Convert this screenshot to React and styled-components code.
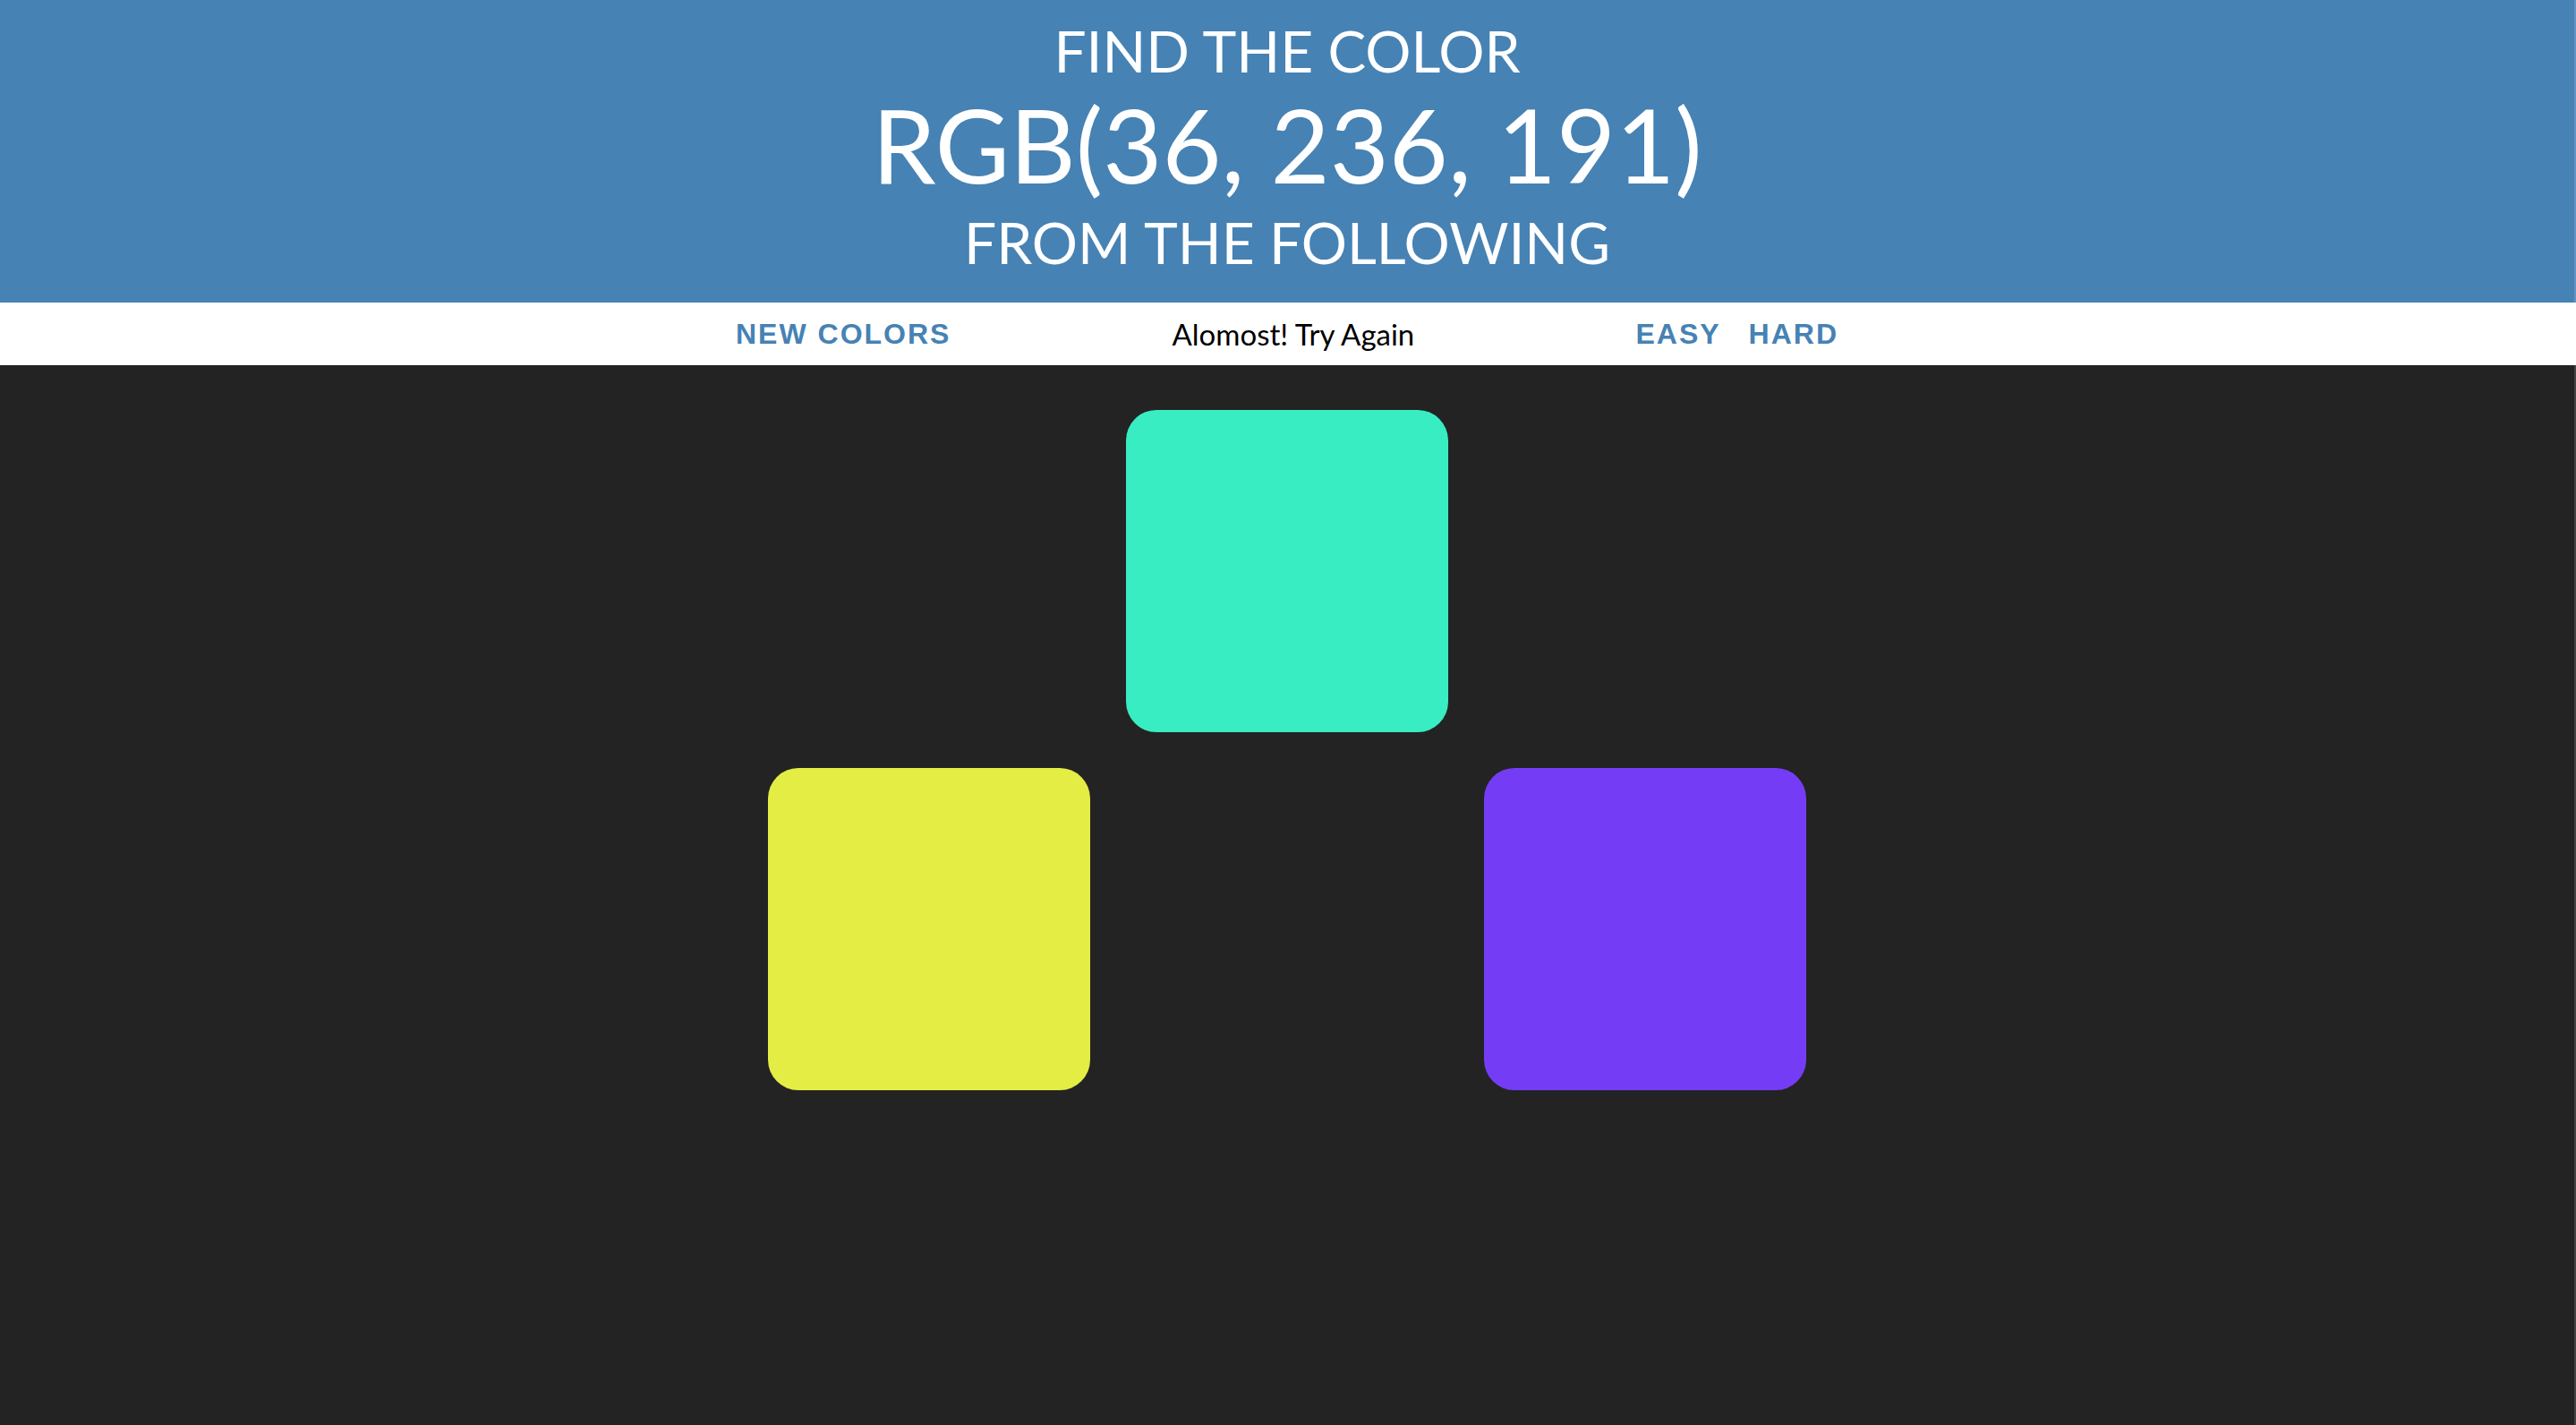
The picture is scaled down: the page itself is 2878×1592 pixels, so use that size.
import React from "react"
import styled, { createGlobalStyle } from "styled-components";

const GlobalStyle = createGlobalStyle`
  html, body {
    margin: 0;
    padding: 0;
    background: #232323;
  }
  body {
    font-family: Lato, "Noto Sans", sans-serif;
  }
`

const squares = [
    { id: 1, color: "#232323" },
    { id: 2, color: "#38edc1" },
    { id: 3, color: "#232323" },
    { id: 4, color: "#e3ed44" },
    { id: 5, color: "#232323" },
    { id: 6, color: "#743df5" },
];

export default function App() {
    return (
        <Page>
            <GlobalStyle />
            <Header>
                <Line>FIND THE COLOR</Line>
                <ColorCode>RGB(36, 236, 191)</ColorCode>
                <Line $last>FROM THE FOLLOWING</Line>
            </Header>
            <Stripe>
                <NavButton>NEW COLORS</NavButton>
                <Message>Alomost! Try Again</Message>
                <NavButton>EASY</NavButton>
                <NavButton $spaced>HARD</NavButton>
            </Stripe>
            <Container>
                {squares.map((sq) => (
                    <Square key={sq.id} $color={sq.color} />
                ))}
            </Container>
            <ScrollEdge />
        </Page>
    )
}

const Page = styled.div`
    min-height: 100vh;
    background: #232323;
`

const Header = styled.h1`
    margin: 0;
    padding: 20px 2px 24px 0;
    background: steelblue;
    color: #fff;
    text-align: center;
    font-weight: 400;
    text-transform: uppercase;
`

const Line = styled.span`
    display: block;
    font-size: 64px;
    line-height: ${(p) => (p.$last ? "86px" : "74px")};
`

const ColorCode = styled.span`
    display: block;
    font-size: 114px;
    line-height: 134px;
`

const Stripe = styled.div`
    height: 70px;
    padding-right: 2px;
    background: #fff;
    display: flex;
    justify-content: center;
    align-items: center;
`

const NavButton = styled.button`
    border: none;
    background: none;
    padding: 0;
    margin: 0 0 0 ${(p) => (p.$spaced ? "31px" : "0")};
    color: steelblue;
    font-family: "Liberation Sans", Arial, sans-serif;
    font-weight: 700;
    font-size: 32px;
    letter-spacing: 2px;
    text-transform: uppercase;
    cursor: pointer;
`

const Message = styled.span`
    width: 765px;
    text-align: center;
    color: #000;
    font-size: 33px;
`

const Container = styled.div`
    display: grid;
    grid-template-columns: repeat(3, 360px);
    gap: 40px;
    justify-content: center;
    padding: 50px 2px 0 0;
`

const Square = styled.div`
    width: 360px;
    height: 360px;
    border-radius: 34px;
    background: ${(p) => p.$color};
`

const ScrollEdge = styled.div`
    position: fixed;
    top: 0;
    right: 0;
    width: 2px;
    height: 100vh;
    background: rgba(255, 255, 255, 0.15);
`
